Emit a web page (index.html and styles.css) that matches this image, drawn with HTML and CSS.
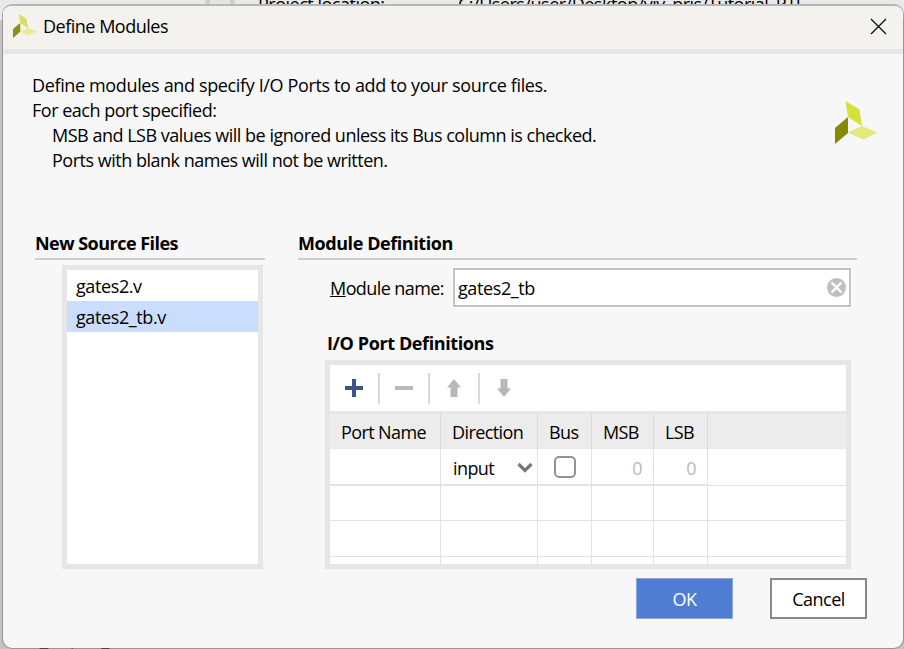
FILE: index.html
```html
<!DOCTYPE html>
<html lang="en">
<head>
<meta charset="utf-8">
<title>Define Modules</title>
<link rel="stylesheet" href="styles.css">
</head>
<body>
<div class="backdrop">
  <div class="backdrop-side"></div>
  <div class="backdrop-divider"></div>
  <div class="backdrop-main"><span class="loc-label">Project location:</span><span class="loc-path">C:/Users/user/Desktop/viv_pris/Tutorial_RTL</span></div>
</div>
<div class="backdrop-foot">Design Runs</div>
<main class="dialog">
  <header class="titlebar">
    <svg class="title-logo" width="24" height="24" viewBox="0 0 43 43"><path fill="#d7df5c" d="M10.500 0 24 8.500 27 25 13 16Z"/><path fill="#8d9110" d="M0 27 13 16V32L0 43Z"/><path fill="#e8ec96" d="M13 32 27 25 43 31 28 38.500Z"/></svg>
    <h1>Define Modules</h1>
    <svg class="close" width="17" height="17" viewBox="0 0 17 17"><path d="M1 1 16 16M16 1 1 16" stroke="#111" stroke-width="1.4" fill="none"/></svg>
  </header>
  <section class="intro">
    <div class="intro-text">
      <p class="lead">Define modules and specify I/O Ports to add to your source files.</p>
      <p>For each port specified:</p>
      <p class="indent">MSB and LSB values will be ignored unless its Bus column is checked.</p>
      <p class="indent">Ports with blank names will not be written.</p>
    </div>
    <svg class="logo" width="43" height="43" viewBox="0 0 43 43"><path fill="#d5e03a" d="M10.500 0 24.500 8.500 27 25 13 16Z"/><path fill="#848a08" d="M0 27 13 16V32L0 43Z"/><path fill="#e3ea7a" d="M13 31.500 27 25 43 31.500 28 38.500Z"/></svg>
  </section>
  <div class="columns">
    <section class="sources">
      <h2 class="h-src">New Source Files</h2>
      <ul class="list">
        <li>gates2.v</li>
        <li class="selected">gates2_tb.v</li>
      </ul>
    </section>
    <section class="module">
      <h2>Module Definition</h2>
      <div class="field">
        <label><u>M</u>odule name:</label>
        <div class="input"><span>gates2_tb</span>
          <svg width="19" height="19" viewBox="0 0 19 19"><circle cx="9.500" cy="9.500" r="9.500" fill="#bfbfbf"/><path d="M4.500 4.500 14.500 14.500M14.500 4.500 4.500 14.500" stroke="#fff" stroke-width="2.400"/></svg>
        </div>
      </div>
      <h3>I/O Port Definitions</h3>
      <div class="panel">
        <div class="toolbar">
          <span class="tool"><svg width="18" height="18"><path fill="#3a5389" d="M7 0h4v7h7v4h-7v7H7v-7H0V7h7Z"/></svg></span>
          <span class="tool"><svg width="18" height="18"><path fill="#bababa" d="M0 7h18v4H0Z"/></svg></span>
          <span class="tool"><svg width="18" height="18"><path fill="#b8b8b8" d="M9 0 16 8.500H12.500V18H5.500V8.500H2Z"/></svg></span>
          <span class="tool"><svg width="18" height="18"><path fill="#b8b8b8" d="M9 18 16 9.500H12.500V0H5.500V9.500H2Z"/></svg></span>
        </div>
        <div class="grid">
          <div class="row head"><span>Port Name</span><span>Direction</span><span>Bus</span><span>MSB</span><span>LSB</span><span></span></div>
          <div class="row first"><span></span><span class="dir">input<svg width="16" height="11" viewBox="0 0 16 11"><path d="M1.500 2 8 8.500 14.500 2" stroke="#777" stroke-width="3.200" fill="none"/></svg></span><span class="check"><i></i></span><span class="num">0</span><span class="num">0</span><span></span></div>
          <div class="row"><span></span><span></span><span></span><span></span><span></span><span></span></div>
          <div class="row tall"><span></span><span></span><span></span><span></span><span></span><span></span></div>
          <div class="row last"><span></span><span></span><span></span><span></span><span></span><span></span></div>
        </div>
      </div>
    </section>
  </div>
  <footer class="actions"><button class="ok">OK</button><button class="cancel">Cancel</button></footer>
</main>
</body>
</html>
```

FILE: styles.css
```css
* { box-sizing: border-box; }
body {
  margin: 0; width: 904px; height: 649px; overflow: hidden; position: relative;
  background: #c4c4c4; color: #000;
  font: 18px/25px "Open Sans", "Noto Sans", sans-serif; letter-spacing: -0.49px;
  white-space: nowrap;
}
h1, h2, h3, p, ul { margin: 0; padding: 0; font-weight: normal; font-size: inherit; }
svg { display: block; flex: none; }
.backdrop { display: flex; height: 20px; background: #e9e9e9; }
.backdrop-side { width: 205px; }
.backdrop-divider { width: 30px; background: linear-gradient(90deg, #cfcfcf 5px, #e4e4e4 5px 25px, #cfcfcf 25px); }
.backdrop-main { display: flex; height: 20px; padding-left: 23px; line-height: 26px; margin-top: -9px; letter-spacing: -0.49px; }
.loc-label { width: 200px; }
.loc-path { letter-spacing: -0.5px; }
.backdrop-foot { position: absolute; left: 38px; top: 641px; font-weight: 700; }
.dialog {
  position: absolute; left: 2px; top: 4px; width: 902px; height: 645px;
  background: #f7f7f7; background-clip: padding-box;
  border: 1px solid rgba(120, 120, 120, 0.6); border-top: 2px solid #b6b6b6;
  border-radius: 10px; overflow: hidden;
}
.titlebar { display: flex; align-items: center; height: 48px; padding: 0 16px 2px 10px; background: #f3f2ef; border-bottom: 5px solid #e6e6e6; }
.title-logo { margin-top: -2px; }
.titlebar h1 { margin-left: 6px; flex: 1; }
.intro { display: flex; justify-content: space-between; padding: 19px 25px 0 29px; height: 170px; }
.lead { letter-spacing: -0.36px; }
.indent { padding-left: 20px; }
.logo { margin-top: 28px; }
.columns { display: flex; padding-left: 32px; gap: 33px; }
.sources { width: 230px; }
.module { width: 559px; }
h2 { height: 36px; padding-top: 7px; border-bottom: 2px solid #cecece; font-weight: 700; line-height: 25px; letter-spacing: -0.43px; }
.h-src { letter-spacing: -0.53px; }
h3 { margin: 24px 0 4px 29px; font-weight: 700; letter-spacing: -0.4px; }
.list { width: 201px; height: 304px; margin: 5px 0 0 27px; border: 5px solid #e6e6e6; background: #fff; list-style: none; letter-spacing: -0.4px; }
.list li { height: 31px; line-height: 33px; padding-left: 9px; }
.list .selected { background: #cbddfd; }
.field { display: flex; align-items: center; margin: 8px 0 0 32px; height: 39px; }
.field label { width: 122px; padding-top: 2px; letter-spacing: -0.58px; }
.input { display: flex; align-items: center; justify-content: space-between; width: 400px; height: 41px; padding: 0 5px; background: #fff; border: 1px solid #fff; outline: 2px solid #c2c2c2; outline-offset: -3px; letter-spacing: -0.4px; }
.input span { padding-top: 2px; }
.panel { width: 526px; height: 209px; margin-left: 27px; border: 5px solid #e6e6e6; background: #fff; }
.toolbar { display: flex; align-items: center; height: 46px; }
.tool { display: flex; align-items: center; justify-content: center; width: 50px; height: 31px; border-right: 2px solid #d9d9d9; }
.tool:last-child { border: 0; width: 48px; }
.grid { border-top: 3px solid #e6e6e6; }
.row { display: grid; grid-template-columns: 111px 97px 54px 62px 54px 1fr; grid-template-rows: 100%; height: 35px; }
.row > span { border-right: 1px solid #e2e2e2; border-bottom: 1px solid #e2e2e2; }
.row > span:last-child { border-right: 0; }
.row.head { background: #ececec; line-height: 37px; letter-spacing: -0.6px; }
.row.head > span { padding-left: 11px; border-bottom: 0; border-right-color: #dadada; }
.row.first { height: 37px; line-height: 38px; }
.row.first > span:not(:last-child) { border-bottom-width: 2px; }
.row.tall { height: 36px; }
.row.last { height: 7px; }
.row.last > span { border-bottom: 0; }
.dir { display: flex; align-items: center; justify-content: space-between; padding: 2px 4px 0 12px; letter-spacing: -0.6px; }
.check i { display: block; width: 22px; height: 22px; margin: 7px 0 0 16px; border: 2px solid #939393; border-radius: 5px; }
.num { color: #b9b9b9; text-align: right; padding-right: 11px; }
.actions { display: flex; justify-content: flex-end; gap: 37px; padding: 9px 36px 0 0; }
button { width: 97px; height: 41px; padding: 2px 0 0; font: inherit; letter-spacing: inherit; border-radius: 0; }
.ok { color: #fff; background: #4f7dd2; border: 1px solid #88a6e0; }
.cancel { color: #000; background: #fff; border: 2px solid #898989; }
```
